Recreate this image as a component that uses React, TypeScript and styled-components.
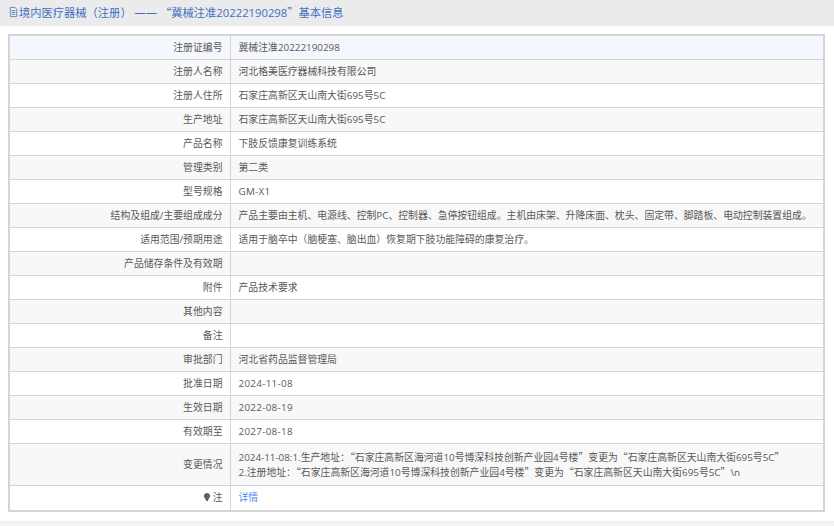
import type { ReactNode } from 'react'
import styled, { createGlobalStyle } from 'styled-components'

const GlobalStyle = createGlobalStyle`
  html, body {
    margin: 0;
    padding: 0;
    background: #fff;
    overflow: hidden;
  }
  body {
    font-family: "Open Sans", "Noto Sans CJK SC", sans-serif;
  }
`

const Paren = styled.span`
  font-family: "Noto Sans CJK TC", sans-serif;
`

const Quote = styled.span`
  font-family: "Noto Sans CJK SC", sans-serif;
`

const Header = styled.div`
  display: flex;
  align-items: center;
  box-sizing: border-box;
  height: 26px;
  padding: 0 0 3px 8px;
  background: #ebebeb;
  color: #3f6fc4;
  font-size: 11.28px;
  white-space: pre;
`

const DocIcon = styled.svg`
  width: 11px;
  height: 12px;
  flex: none;
`

const BulbIcon = styled.svg`
  width: 8px;
  height: 10px;
  vertical-align: -1px;
  margin-right: 2px;
`

const Frame = styled.div`
  padding: 8px 9px 9px 8px;
`

const Table = styled.table`
  width: 100%;
  border-collapse: collapse;
  border: 2px solid #d4d4d4;
  font-size: 9.85px;
  color: #595959;
  table-layout: fixed;
`

const Row = styled.tr<{ $index: number; $last?: boolean }>`
  height: ${(p) => (p.$last ? 26 : 24)}px;
  background: ${(p) => (p.$index === 0 ? '#f4f7fd' : p.$index % 2 === 1 ? '#f8f8f8' : '#fff')};
`

const Label = styled.td`
  width: 221px;
  box-sizing: border-box;
  padding: 0 7px 1px 0;
  text-align: right;
  border: 1px solid #d4d4d4;
`

const Value = styled.td<{ $tall?: boolean; $date?: boolean }>`
  padding: ${(p) => (p.$tall ? '2px 7px 0 8px' : '0 7px 1px 8px')};
  border: 1px solid #d4d4d4;
  line-height: ${(p) => (p.$tall ? '15.5px' : '12px')};
  height: ${(p) => (p.$tall ? '39px' : 'auto')};
  letter-spacing: ${(p) => (p.$date ? '0.3px' : 'normal')};
  white-space: nowrap;
`

const DetailLink = styled.a`
  color: #4a8df0;
  text-decoration: none;
`

const Footer = styled.div`
  height: 7px;
  background: linear-gradient(#eeeeee, #fafafa);
`

// curly quotes take a full em in the reference, parens sit centred in theirs
const typeset = (text: string): ReactNode =>
  text.split(/([“”（）])/).map((part, i) => {
    if (part === '“' || part === '”') return <Quote key={i}>{part}</Quote>
    if (part === '（' || part === '）') return <Paren key={i}>{part}</Paren>
    return part
  })

const rows: { label: string; value?: string; lines?: string[]; date?: boolean }[] = [
  { label: '注册证编号', value: '冀械注准20222190298' },
  { label: '注册人名称', value: '河北格美医疗器械科技有限公司' },
  { label: '注册人住所', value: '石家庄高新区天山南大街695号5C' },
  { label: '生产地址', value: '石家庄高新区天山南大街695号5C' },
  { label: '产品名称', value: '下肢反馈康复训练系统' },
  { label: '管理类别', value: '第二类' },
  { label: '型号规格', value: 'GM-X1', date: true },
  { label: '结构及组成/主要组成成分', value: '产品主要由主机、电源线、控制PC、控制器、急停按钮组成。主机由床架、升降床面、枕头、固定带、脚踏板、电动控制装置组成。' },
  { label: '适用范围/预期用途', value: '适用于脑卒中（脑梗塞、脑出血）恢复期下肢功能障碍的康复治疗。' },
  { label: '产品储存条件及有效期' },
  { label: '附件', value: '产品技术要求' },
  { label: '其他内容' },
  { label: '备注' },
  { label: '审批部门', value: '河北省药品监督管理局' },
  { label: '批准日期', value: '2024-11-08', date: true },
  { label: '生效日期', value: '2022-08-19', date: true },
  { label: '有效期至', value: '2027-08-18', date: true },
  {
    label: '变更情况',
    lines: [
      '2024-11-08:1.生产地址：“石家庄高新区海河道10号博深科技创新产业园4号楼”变更为“石家庄高新区天山南大街695号5C”',
      '2.注册地址：“石家庄高新区海河道10号博深科技创新产业园4号楼”变更为“石家庄高新区天山南大街695号5C”\\n',
    ],
  },
]

export default function App() {
  return (
    <>
      <GlobalStyle />
      <Header>
        <DocIcon viewBox="0 0 12 12">
          <path d="M2.5 1h5l2 2v8h-7zM4 4.5h4M4 6.5h4M4 8.5h4" fill="none" stroke="#5a7fc0" strokeWidth="1" />
        </DocIcon>
        {typeset('境内医疗器械（注册） —— “冀械注准20222190298”基本信息')}
      </Header>
      <Frame>
        <Table>
          <tbody>
            {rows.map((r, i) => (
              <Row key={r.label} $index={i}>
                <Label>{r.label}</Label>
                <Value $tall={!!r.lines} $date={r.date}>
                  {r.lines ? r.lines.map((l) => <div key={l}>{typeset(l)}</div>) : r.value && typeset(r.value)}
                </Value>
              </Row>
            ))}
            <Row $index={18} $last>
              <Label>
                <BulbIcon viewBox="0 0 10 12">
                  <path d="M5 1a4 4 0 0 0-2.2 7.3L4 11h2l1.2-2.7A4 4 0 0 0 5 1z" fill="#5f6368" />
                </BulbIcon>
                注
              </Label>
              <Value>
                <DetailLink href="#">详情</DetailLink>
              </Value>
            </Row>
          </tbody>
        </Table>
      </Frame>
      <Footer />
    </>
  )
}
